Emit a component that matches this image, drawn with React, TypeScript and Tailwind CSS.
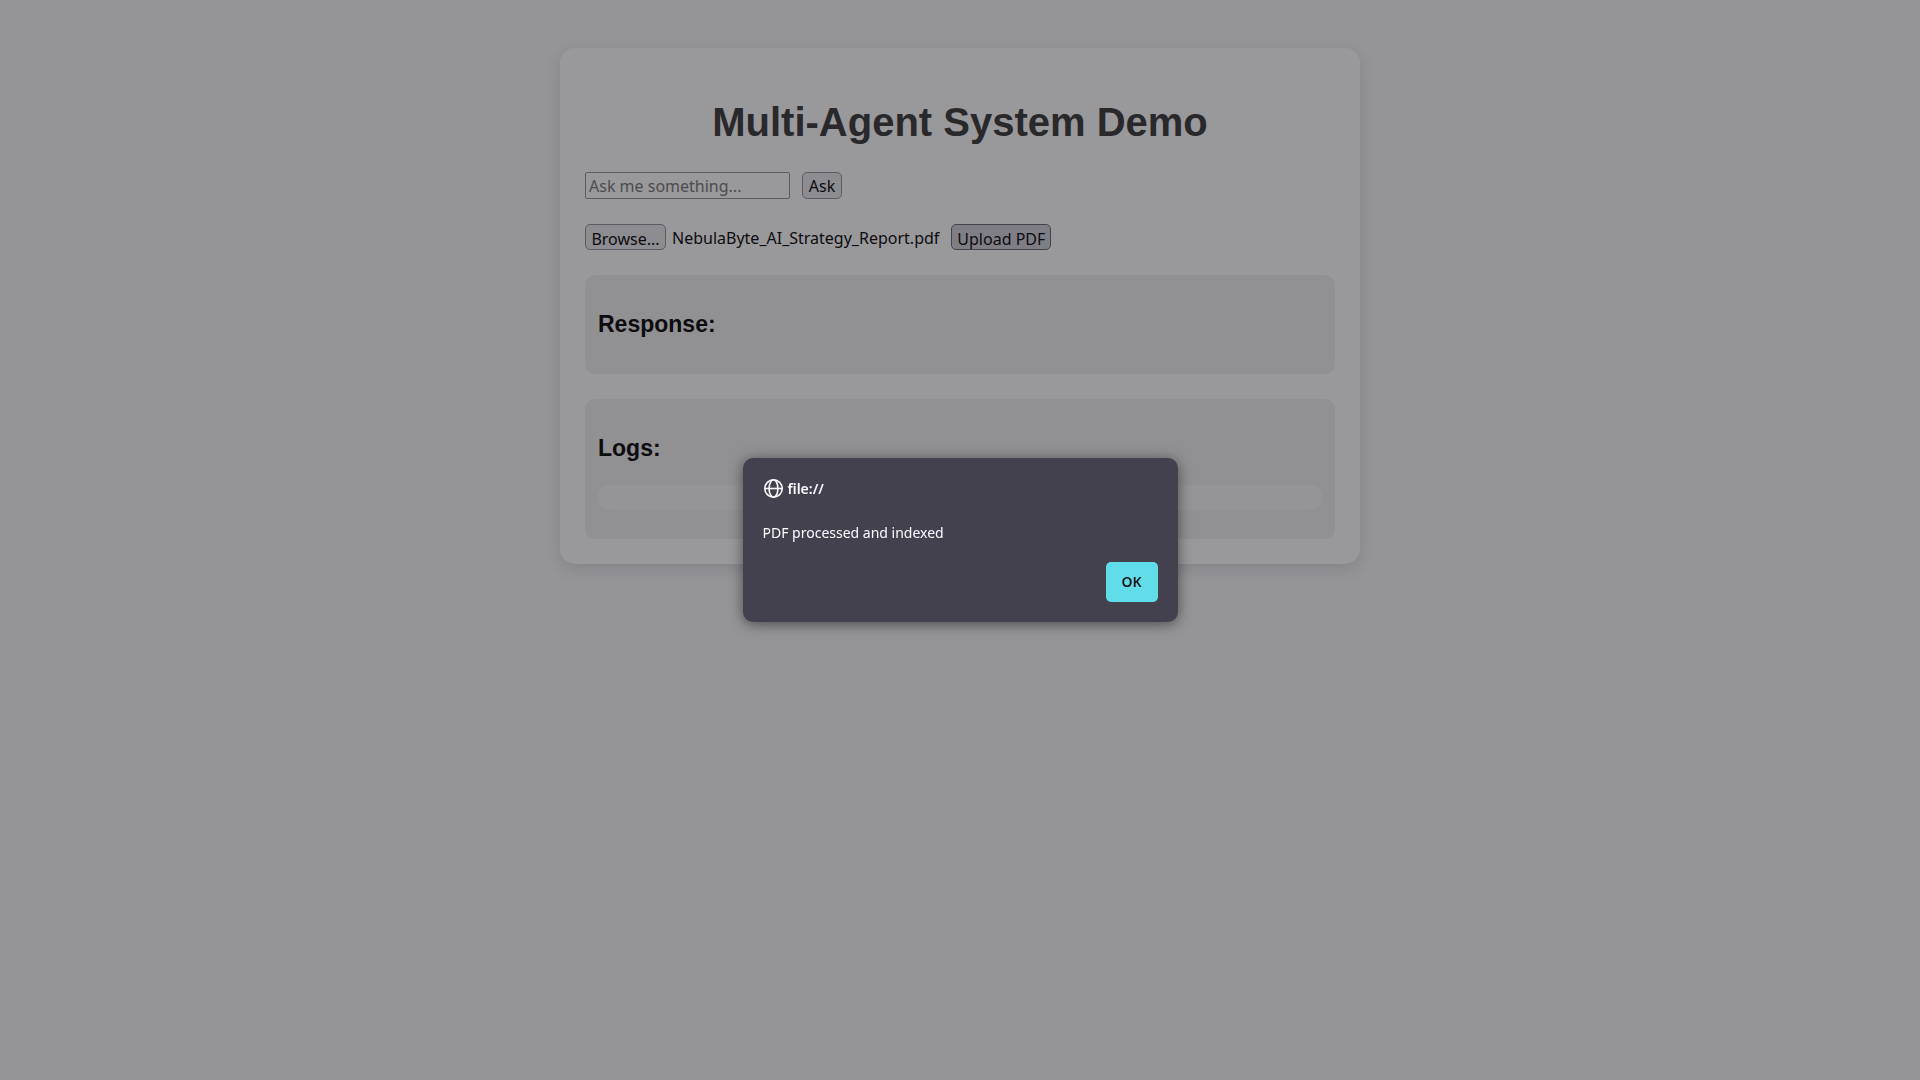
import { useRef, useState } from "react";

function GlobeIcon() {
  return (
    <svg viewBox="0 0 20 20" className="size-5" fill="none" stroke="currentColor" strokeWidth="1.6" aria-hidden="true">
      <circle cx="10.5" cy="9.5" r="8.7" />
      <ellipse cx="10.5" cy="9.5" rx="4.4" ry="8.7" />
      <path d="M1.8 9.5h17.4" />
    </svg>
  );
}

function AlertDialog({ onClose }: { onClose: () => void }) {
  return (
    <div className="fixed inset-0 flex items-center justify-center bg-[rgba(28,27,34,0.45)]">
      <div
        role="alertdialog"
        aria-labelledby="alert-origin"
        aria-describedby="alert-message"
        className="flex w-[435px] flex-col rounded-[10px] bg-[#42414d] p-5 font-['Noto_Sans',sans-serif] text-sm text-[#fbfbfe] shadow-[0_2px_14px_rgba(0,0,0,0.5)]"
      >
        <div className="flex h-[22px] items-center gap-[5px]">
          <GlobeIcon />
          <h2 id="alert-origin" className="font-semibold">
            file://
          </h2>
        </div>
        <p id="alert-message" className="mt-[23px] leading-5">
          PDF processed and indexed
        </p>
        <button
          type="button"
          onClick={onClose}
          className="mt-[19px] h-10 w-[52px] self-end rounded-[5px] bg-[#61dde9] font-semibold text-[#15141a]"
        >
          OK
        </button>
      </div>
    </div>
  );
}

const control =
  "rounded-[5px] border border-[#8f8f9d] bg-[#e9e9ed] text-black";

export default function App() {
  const [open, setOpen] = useState(true);
  const [fileName, setFileName] = useState("NebulaByte_AI_Strategy_Report.pdf");
  const fileRef = useRef<HTMLInputElement>(null);

  return (
    <div className="min-h-screen bg-[#f7f7f7] px-6 py-12 font-['Liberation_Sans',Arial,sans-serif]">
      <main className="mx-auto max-w-[800px] rounded-[15px] bg-white p-[25px] shadow-[0_5px_15px_rgba(0,0,50,0.12)]">
        <h1 className="mt-[25px] text-center text-[40px] leading-[48px] font-bold text-[#333333]">
          Multi-Agent System Demo
        </h1>
        <div className="mt-[26px] flex items-center gap-3 font-['Noto_Sans',sans-serif] text-base leading-6">
          <input
            type="text"
            aria-label="Question"
            placeholder="Ask me something..."
            className="h-[27px] w-[205px] rounded-[2px] border border-[#8f8f9d] bg-white px-[3px] placeholder:text-[#757575]"
          />
          <button type="button" className={`${control} h-[27px] w-10`}>
            Ask
          </button>
        </div>
        <div className="mt-[25px] flex items-center gap-3 font-['Noto_Sans',sans-serif] text-base leading-6">
          <div className="flex items-center gap-1.5">
            <button type="button" className={`${control} h-[26px] w-[81px] pt-0.5`} onClick={() => fileRef.current?.click()}>
              Browse...
            </button>
            <input
              ref={fileRef}
              type="file"
              accept="application/pdf"
              aria-label="PDF file"
              className="hidden"
              onChange={(e) => setFileName(e.target.files?.[0]?.name ?? "")}
            />
            <span className="pt-0.5">{fileName}</span>
          </div>
          <button
            type="button"
            onClick={() => setOpen(true)}
            className="h-[26px] w-[100px] rounded-[5px] border border-[#676774] bg-[#d0d0d7] pt-0.5 text-black"
          >
            Upload PDF
          </button>
        </div>
        <section className="mt-[25px] rounded-[10px] bg-[#f0f0f0] px-[13px] pt-9 pb-9">
          <h2 className="text-[23px] leading-[27px] font-bold">Response:</h2>
        </section>
        <section className="mt-[25px] rounded-[10px] bg-[#f0f0f0] px-[13px] pt-9 pb-[29px]">
          <h2 className="text-[23px] leading-[27px] font-bold">Logs:</h2>
          <div className="mt-[23px] h-[25px] rounded-[12px] bg-[#f7f7f7]" />
        </section>
      </main>
      {open && <AlertDialog onClose={() => setOpen(false)} />}
    </div>
  );
}
